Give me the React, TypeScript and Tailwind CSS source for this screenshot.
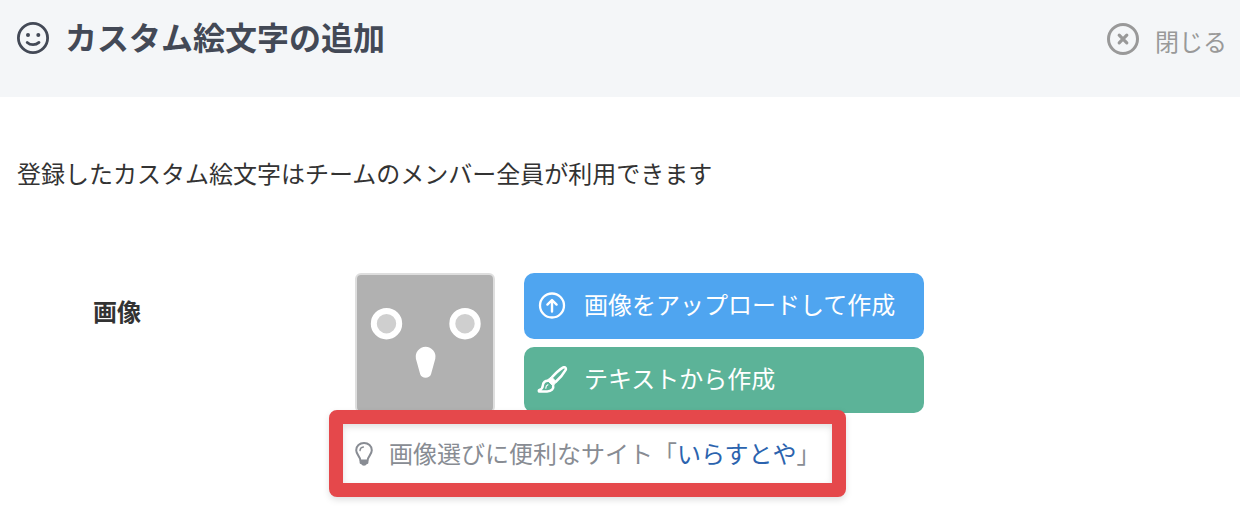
import React from 'react';

const SmileIcon = () => (
  <svg className="h-8 w-8 shrink-0" viewBox="0 0 32 32" fill="none" stroke="currentColor" aria-hidden="true">
    <circle cx="16" cy="16" r="14.6" strokeWidth="2.8" />
    <circle cx="11" cy="13" r="2" fill="currentColor" stroke="none" />
    <circle cx="21.3" cy="13" r="2" fill="currentColor" stroke="none" />
    <path d="M10.2 20.4c3.2 3 8.4 3 11.8 0" strokeWidth="2.8" strokeLinecap="round" />
  </svg>
);

const CloseIcon = () => (
  <svg className="h-8 w-8 shrink-0" viewBox="0 0 32 32" fill="none" stroke="currentColor" aria-hidden="true">
    <circle cx="16" cy="16" r="14.5" strokeWidth="3" />
    <path d="M12.2 12.2l7.6 7.6M19.8 12.2l-7.6 7.6" strokeWidth="3.2" strokeLinecap="round" />
  </svg>
);

const UploadIcon = () => (
  <svg className="h-7 w-7" viewBox="0 0 28 28" fill="none" stroke="currentColor" aria-hidden="true">
    <circle cx="14" cy="13.5" r="12" strokeWidth="2.3" />
    <path d="M14 19.500V8.500M9.400 12.600l4.600-4.600 4.600 4.600" strokeWidth="2.4" strokeLinecap="round" strokeLinejoin="round" />
  </svg>
);

const BrushIcon = () => (
  <svg className="h-7 w-8" viewBox="0 0 32 28" fill="none" stroke="currentColor" strokeWidth="2.500" strokeLinejoin="round" aria-hidden="true">
    <path d="M15.800 11.400C19.600 7.200 23.600 3.600 26.800 1.600c2-1.200 3.900.6 2.700 2.600C27.400 8 24.200 12 19.600 16" />
    <path d="M15.400 10.800l5 5.200-3.400 3.800-5.800-5.600z" fill="currentColor" strokeWidth="1" />
    <path d="M13 14.800c-3.800-.7-6 1.700-6.200 4.700-.1 2.200-1 3.700-3.400 4.400-.9.300-.8 1.600.1 1.600h7.600c4.300 0 7-2.600 6-6.400" />
    <path d="M9.800 22.200c0-1.600.7-2.800 2.100-3.400" strokeWidth="1.200" strokeLinecap="round" />
  </svg>
);

const BulbIcon = () => (
  <svg className="h-6 w-[18px] shrink-0" viewBox="0 0 18 24" fill="none" stroke="currentColor" aria-hidden="true">
    <path d="M5.400 18.600c0-4-4.200-6-4.200-10.300C1.200 4 4.600 1.100 9 1.100S16.800 4 16.800 8.300c0 4.300-4.200 6.300-4.200 10.300z" strokeWidth="2" strokeLinejoin="round" />
    <path d="M5 8.600C5.100 6.600 6.400 5.200 8.400 5" strokeWidth="1.400" strokeLinecap="round" />
    <path d="M4.600 18.600h8.800v2c0 1-.8 1.500-1.700 1.500-.4 2.200-5 2.200-5.400 0-.9 0-1.700-.5-1.700-1.500z" fill="currentColor" stroke="none" />
  </svg>
);

// Placeholder face shown until an image is chosen
const EmojiPreview = () => (
  <div className="h-[140px] w-[140px] shrink-0 overflow-hidden rounded-md border-2 border-[#dedede] bg-[#b1b1b1]">
    <svg className="h-full w-full" viewBox="0 0 136 136" role="img" aria-label="プレビュー">
      <circle cx="29.500" cy="48.700" r="12.700" fill="#cfcfcf" stroke="#fff" strokeWidth="6" />
      <circle cx="108" cy="48.700" r="12.700" fill="#cfcfcf" stroke="#fff" strokeWidth="6" />
      <path d="M58.900 83.700a9.900 9.900 0 1 1 19.400 0l-4.300 15.600c-1.200 4.600-9.600 4.600-10.800 0z" fill="#fff" />
    </svg>
  </div>
);

const CreateButton = ({ icon: Icon, color, children }: any) => {
  const colorClasses: any = {
    blue: 'bg-[#4fa5f0]',
    green: 'bg-[#5cb398]',
  };

  return (
    <button type="button" className={`flex h-[66px] w-full items-center rounded-[10px] pl-3 text-white ${colorClasses[color]}`}>
      <span className="mr-4 flex w-8 justify-center">
        <Icon />
      </span>
      <span className="pb-1">{children}</span>
    </button>
  );
};

export default function App() {
  return (
    <div className="min-h-screen bg-white font-['Noto_Sans_CJK_JP',sans-serif] text-2xl text-[#333333]">
      <header className="flex items-start justify-between bg-[#f4f6f8] pt-3 pr-[13px] pb-[33px] pl-[17px]">
        <h1 className="flex items-center gap-4 text-[32px] leading-[48px] font-bold text-[#434956]">
          <SmileIcon />
          <span className="pb-1">カスタム絵文字の追加</span>
        </h1>
        <button type="button" className="flex items-center gap-4 pt-[9px] text-[#999999]">
          <CloseIcon />
          <span className="pt-1">閉じる</span>
        </button>
      </header>

      <main className="px-[17px] pt-[60px]">
        <p>登録したカスタム絵文字はチームのメンバー全員が利用できます</p>

        <section className="mt-[84px] flex items-start pl-[76px]">
          <h2 className="w-[262px] shrink-0 pt-[22px] font-bold">画像</h2>
          <div>
            <div className="flex items-start gap-[29px]">
              <EmojiPreview />
              <div className="flex w-[400px] flex-col gap-2">
                <CreateButton icon={UploadIcon} color="blue">画像をアップロードして作成</CreateButton>
                <CreateButton icon={BrushIcon} color="green">テキストから作成</CreateButton>
              </div>
            </div>
            <div className="relative mt-[11px] -ml-3 flex h-[59px] w-fit items-center gap-4 pr-[11px] pl-3 text-[#888c93]">
              <BulbIcon />
              <p className="pb-[2px]">
                画像選びに便利なサイト「
                <a href="#irasutoya" className="text-[#2b63ae]">いらすとや</a>」
              </p>
              <div className="pointer-events-none absolute -inset-[14px] rounded-lg border-[14px] border-[#e5484b] drop-shadow-md" />
            </div>
          </div>
        </section>
      </main>
    </div>
  );
}
